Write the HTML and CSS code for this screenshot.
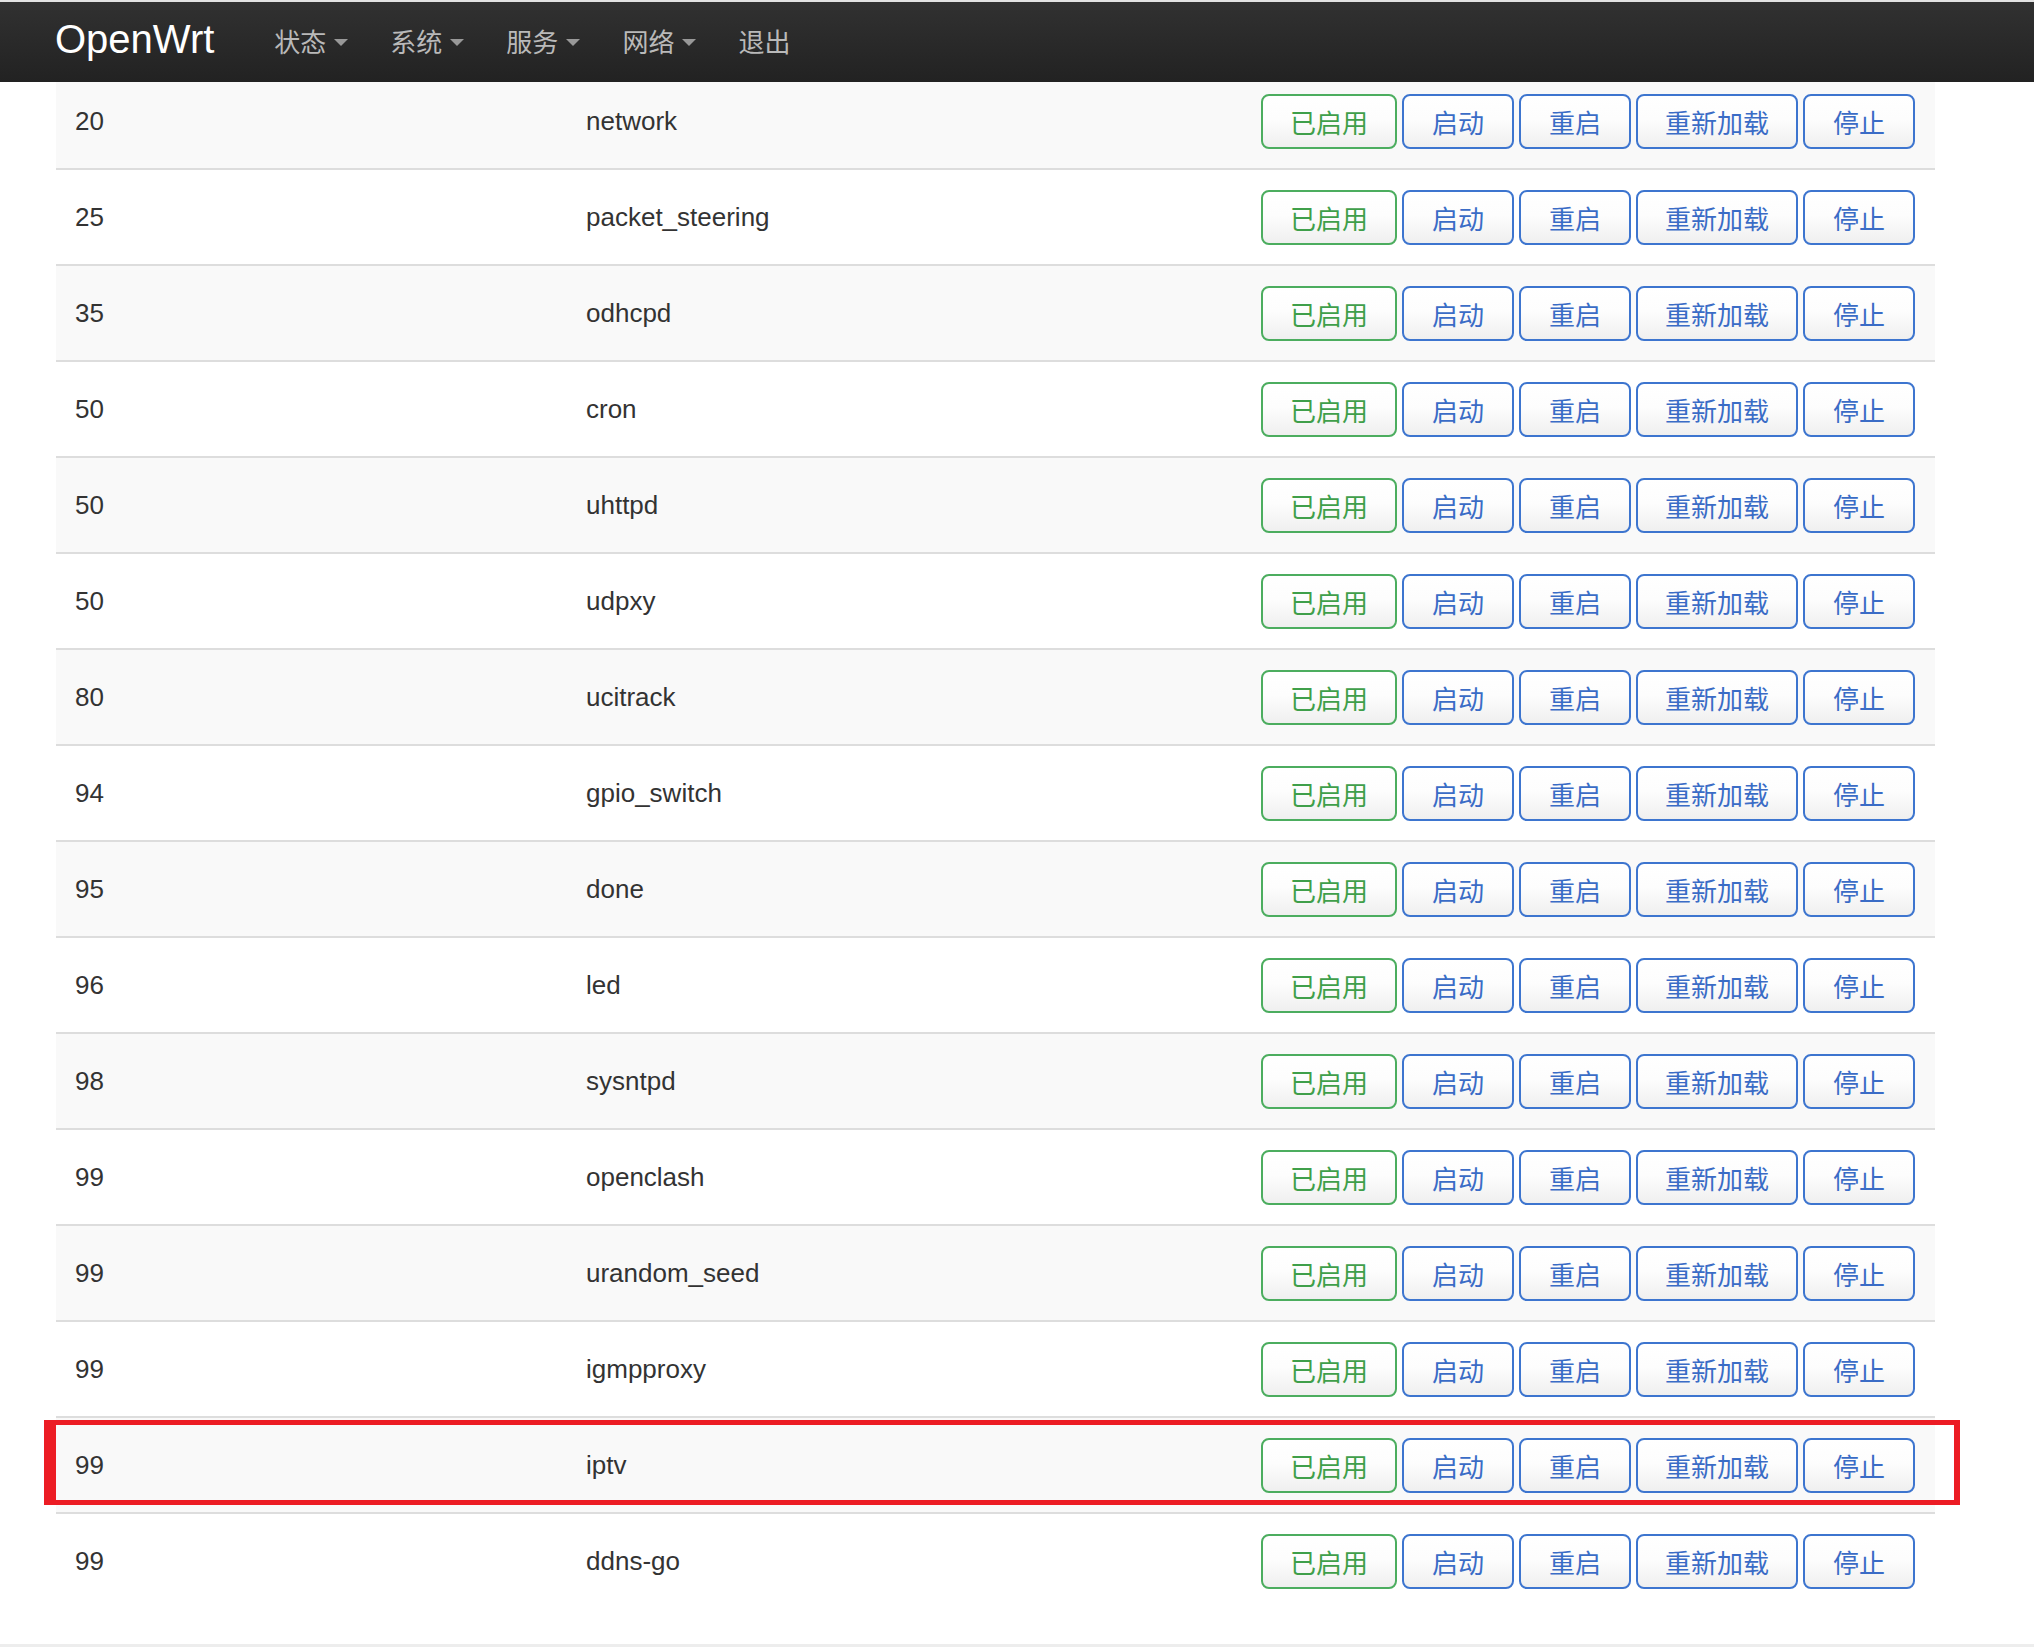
FILE: index.html
```html
<!DOCTYPE html>
<html lang="zh-CN">
<head>
<meta charset="utf-8">
<title>OpenWrt - 启动项</title>
<link rel="stylesheet" href="styles.css">
</head>
<body>
<header class="navbar">
  <a class="brand" href="#">OpenWrt</a>
  <ul class="nav">
    <li class="nav-item"><span>状态</span><i class="caret"></i></li>
    <li class="nav-item"><span>系统</span><i class="caret"></i></li>
    <li class="nav-item"><span>服务</span><i class="caret"></i></li>
    <li class="nav-item"><span>网络</span><i class="caret"></i></li>
    <li class="nav-item"><span>退出</span></li>
  </ul>
</header>

<main class="content">
  <div class="table-wrap">
    <table class="init-table">
      <colgroup>
        <col class="col-prio">
        <col class="col-name">
        <col class="col-actions">
      </colgroup>
      <tbody>
        <tr><td>20</td><td>network</td><td><div class="btns"><button class="btn btn-on">已启用</button><button class="btn">启动</button><button class="btn">重启</button><button class="btn">重新加载</button><button class="btn">停止</button></div></td></tr>
        <tr><td>25</td><td>packet_steering</td><td><div class="btns"><button class="btn btn-on">已启用</button><button class="btn">启动</button><button class="btn">重启</button><button class="btn">重新加载</button><button class="btn">停止</button></div></td></tr>
        <tr><td>35</td><td>odhcpd</td><td><div class="btns"><button class="btn btn-on">已启用</button><button class="btn">启动</button><button class="btn">重启</button><button class="btn">重新加载</button><button class="btn">停止</button></div></td></tr>
        <tr><td>50</td><td>cron</td><td><div class="btns"><button class="btn btn-on">已启用</button><button class="btn">启动</button><button class="btn">重启</button><button class="btn">重新加载</button><button class="btn">停止</button></div></td></tr>
        <tr><td>50</td><td>uhttpd</td><td><div class="btns"><button class="btn btn-on">已启用</button><button class="btn">启动</button><button class="btn">重启</button><button class="btn">重新加载</button><button class="btn">停止</button></div></td></tr>
        <tr><td>50</td><td>udpxy</td><td><div class="btns"><button class="btn btn-on">已启用</button><button class="btn">启动</button><button class="btn">重启</button><button class="btn">重新加载</button><button class="btn">停止</button></div></td></tr>
        <tr><td>80</td><td>ucitrack</td><td><div class="btns"><button class="btn btn-on">已启用</button><button class="btn">启动</button><button class="btn">重启</button><button class="btn">重新加载</button><button class="btn">停止</button></div></td></tr>
        <tr><td>94</td><td>gpio_switch</td><td><div class="btns"><button class="btn btn-on">已启用</button><button class="btn">启动</button><button class="btn">重启</button><button class="btn">重新加载</button><button class="btn">停止</button></div></td></tr>
        <tr><td>95</td><td>done</td><td><div class="btns"><button class="btn btn-on">已启用</button><button class="btn">启动</button><button class="btn">重启</button><button class="btn">重新加载</button><button class="btn">停止</button></div></td></tr>
        <tr><td>96</td><td>led</td><td><div class="btns"><button class="btn btn-on">已启用</button><button class="btn">启动</button><button class="btn">重启</button><button class="btn">重新加载</button><button class="btn">停止</button></div></td></tr>
        <tr><td>98</td><td>sysntpd</td><td><div class="btns"><button class="btn btn-on">已启用</button><button class="btn">启动</button><button class="btn">重启</button><button class="btn">重新加载</button><button class="btn">停止</button></div></td></tr>
        <tr><td>99</td><td>openclash</td><td><div class="btns"><button class="btn btn-on">已启用</button><button class="btn">启动</button><button class="btn">重启</button><button class="btn">重新加载</button><button class="btn">停止</button></div></td></tr>
        <tr><td>99</td><td>urandom_seed</td><td><div class="btns"><button class="btn btn-on">已启用</button><button class="btn">启动</button><button class="btn">重启</button><button class="btn">重新加载</button><button class="btn">停止</button></div></td></tr>
        <tr><td>99</td><td>igmpproxy</td><td><div class="btns"><button class="btn btn-on">已启用</button><button class="btn">启动</button><button class="btn">重启</button><button class="btn">重新加载</button><button class="btn">停止</button></div></td></tr>
        <tr><td>99</td><td>iptv</td><td><div class="btns"><button class="btn btn-on">已启用</button><button class="btn">启动</button><button class="btn">重启</button><button class="btn">重新加载</button><button class="btn">停止</button></div></td></tr>
        <tr><td>99</td><td>ddns-go</td><td><div class="btns"><button class="btn btn-on">已启用</button><button class="btn">启动</button><button class="btn">重启</button><button class="btn">重新加载</button><button class="btn">停止</button></div></td></tr>
      </tbody>
    </table>
    <div class="highlight"></div>
  </div>
</main>
<div class="page-rule"></div>
</body>
</html>
```

FILE: styles.css
```css
* {
  box-sizing: border-box;
}

html, body {
  margin: 0;
  padding: 0;
  background: #fff;
}

body {
  font-family: "Liberation Sans", "Noto Sans CJK SC", sans-serif;
  color: #333;
  width: 2034px;
  overflow: hidden;
}

/* ---------- top bar ---------- */
.navbar {
  position: fixed;
  top: 0;
  left: 0;
  right: 0;
  z-index: 10;
  height: 82px;
  border-top: 2px solid #e2e2e2;
  background: linear-gradient(to bottom, #313131 0%, #222 100%);
  display: flex;
  align-items: center;
  padding-left: 55px;
}

.brand {
  font-family: "Liberation Sans", Arial, sans-serif;
  font-size: 40px;
  color: #fff;
  text-decoration: none;
  line-height: 1;
  padding-bottom: 6px;
}

.nav {
  list-style: none;
  margin: 0 0 0 39px;
  padding: 0;
  display: flex;
  align-items: center;
}

.nav-item {
  display: flex;
  align-items: center;
  padding: 0 21px 2px 21px;
  font-family: "Noto Sans CJK SC", sans-serif;
  font-size: 26px;
  color: #b9b9b9;
  line-height: 1;
}

.caret {
  display: inline-block;
  width: 0;
  height: 0;
  margin-left: 8px;
  margin-top: 2px;
  border-top: 7px solid #989898;
  border-left: 7.5px solid transparent;
  border-right: 7.5px solid transparent;
}

/* ---------- content ---------- */
.content {
  margin-left: 56px;
  width: 1879px;
  padding-top: 72px;
}

.table-wrap {
  position: relative;
}

.init-table {
  width: 100%;
  table-layout: fixed;
  border-collapse: separate;
  border-spacing: 0;
  font-size: 26px;
  color: #333;
}

.col-prio { width: 511px; }
.col-name { width: 675px; }
.col-actions { width: 693px; }

.init-table td {
  border-top: 2px solid #dddddd;
  padding: 20px 19px 19px 19px;
  vertical-align: middle;
  line-height: 1.2;
}

.init-table tr:nth-child(odd) td {
  background: #f9f9f9;
}

.btns {
  display: flex;
  gap: 5px;
}

.btn {
  height: 55px;
  min-width: 112px;
  padding: 0 27px;
  border: 2px solid #3d75cf;
  border-radius: 8px;
  background: linear-gradient(to bottom, #ffffff 0%, #fdfdfd 45%, #efefef 100%);
  color: #3a6cc6;
  font-family: "Noto Sans CJK SC", sans-serif;
  font-size: 26px;
  line-height: 1;
  display: inline-flex;
  align-items: center;
  justify-content: center;
  white-space: nowrap;
  cursor: pointer;
}

.btn-on {
  border-color: #4cad5f;
  color: #3f9f4a;
}

/* annotation box around a row */
.highlight {
  position: absolute;
  left: -12px;
  top: 1348px;
  width: 1916px;
  height: 85px;
  border: 5px solid #ec1c24;
  border-left-width: 12px;
  border-right-width: 6px;
  pointer-events: none;
}

.page-rule {
  margin-top: 36px;
  height: 3px;
  background: #ededed;
}
```
